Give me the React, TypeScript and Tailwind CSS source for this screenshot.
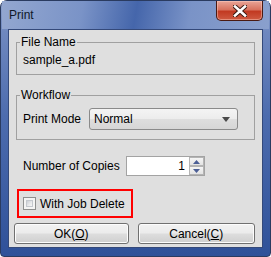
import React from 'react';

const font = { fontFamily: '"Liberation Sans", Arial, sans-serif' };

export default function App() {
  return (
    <div
      className="w-[271px] h-[257px] flex flex-col px-[7px] pb-[8px] rounded-t-[7px] rounded-b-[4px] border border-[#2a3b60] bg-[linear-gradient(180deg,#8fa3cd_0%,#6f88bf_12%,#4d6cae_45%,#2f5199_100%)] text-[12px] leading-[14px] text-black"
      style={font}
    >
      {/* title bar */}
      <div className="h-[28px] flex justify-between items-start -mx-[6px] px-[6px] bg-[linear-gradient(100deg,#93a7d0_0%,#7a93c7_30%,#4566ab_50%,#7a93c7_70%,#8aa0cd_100%)]">
        <span className="pt-[7px] pl-[1px] text-[#101828]">Print</span>
        <CloseButton />
      </div>

      {/* client area */}
      <div className="flex-1 flex flex-col px-[7px] border border-[#34497a] bg-[#dfdfdf]">
        <fieldset className="mt-[5px] border border-[#a0a0a0] px-[6px] pb-[7px]">
          <legend className="-ml-[3px] px-[1px]">File Name</legend>
          <div className="pt-[4px]">sample_a.pdf</div>
        </fieldset>

        <fieldset className="mt-[13px] border border-[#a0a0a0] px-[6px] pb-[9px]">
          <legend className="-ml-[3px] px-[1px]">Workflow</legend>
          <div className="mt-[6px] flex items-center">
            <span className="w-[66px]">Print Mode</span>
            <div className="w-[149px] h-[22px] flex items-center justify-between pl-[4px] pr-[7px] rounded-[3px] border border-[#8a8a8a] bg-[linear-gradient(180deg,#f4f4f4_0%,#ececec_50%,#dedede_51%,#d6d6d6_100%)]">
              <span>Normal</span>
              <svg width="8" height="5" viewBox="0 0 8 5">
                <path d="M0 0 H8 L4 5 Z" fill="#4a4a4a" />
              </svg>
            </div>
          </div>
        </fieldset>

        <div className="mt-[16px] flex items-center pl-[7px]">
          <span className="w-[103px]">Number of Copies</span>
          <div className="w-[79px] h-[20px] flex border border-[#a3a3a3] bg-white">
            <div className="flex-1 flex items-center justify-end pr-[4px]">1</div>
            <div className="w-[15px] flex flex-col">
              <SpinButton up />
              <SpinButton />
            </div>
          </div>
        </div>

        <div className="mt-[13px] ml-[1px] w-[116px] h-[29px] flex items-center border-2 border-[#ff0000] pl-[4px]">
          <div className="w-[13px] h-[13px] border border-[#8e8f8f] p-[2px] bg-[#f4f4f4]">
            <div className="w-full h-full bg-[linear-gradient(135deg,#cbcfd5_0%,#e9eaec_60%,#f6f6f6_100%)] border border-[#c4c8ce]" />
          </div>
          <span className="ml-[4px]">With Job Delete</span>
        </div>

        <div className="mt-[5px] -ml-[2px] flex gap-[9px]">
          <DialogButton width="w-[116px]" label="OK(" mnemonic="O" />
          <DialogButton width="w-[119px]" label="Cancel(" mnemonic="C" />
        </div>
      </div>
    </div>
  );
}

function CloseButton() {
  return (
    <div className="w-[47px] h-[20px] flex items-center justify-center rounded-b-[5px] border border-t-0 border-[#4a1a12] bg-[linear-gradient(180deg,#e9a597_0%,#d8735f_45%,#c23a22_55%,#cf5a41_100%)] shadow-[inset_0_0_0_1px_rgba(255,210,200,0.45)]">
      <svg width="14" height="12" viewBox="0 0 14 12">
        <path d="M2 1.5 L12 10.5 M12 1.5 L2 10.5" stroke="#3a1810" strokeWidth="4.5" strokeLinecap="square" />
        <path d="M2 1.5 L12 10.5 M12 1.5 L2 10.5" stroke="#ffffff" strokeWidth="2.6" strokeLinecap="square" />
      </svg>
    </div>
  );
}

function SpinButton({ up }: { up?: boolean }) {
  return (
    <div className="flex-1 flex items-center justify-center border border-[#b4b4b4] bg-[linear-gradient(180deg,#f5f5f5_0%,#e3e3e3_100%)]">
      <svg width="7" height="4" viewBox="0 0 7 4">
        <path d={up ? 'M0 4 H7 L3.5 0 Z' : 'M0 0 H7 L3.5 4 Z'} fill="#4b5e95" />
      </svg>
    </div>
  );
}

function DialogButton({ width, label, mnemonic }: { width: string; label: string; mnemonic: string }) {
  return (
    <button
      className={`${width} h-[21px] flex items-center justify-center rounded-[3px] border border-[#707070] bg-[linear-gradient(180deg,#f2f2f2_0%,#ebebeb_48%,#dddddd_52%,#cfcfcf_100%)] shadow-[inset_0_0_0_1px_#fcfcfc]`}
    >
      {label}
      <span className="underline">{mnemonic}</span>)
    </button>
  );
}
